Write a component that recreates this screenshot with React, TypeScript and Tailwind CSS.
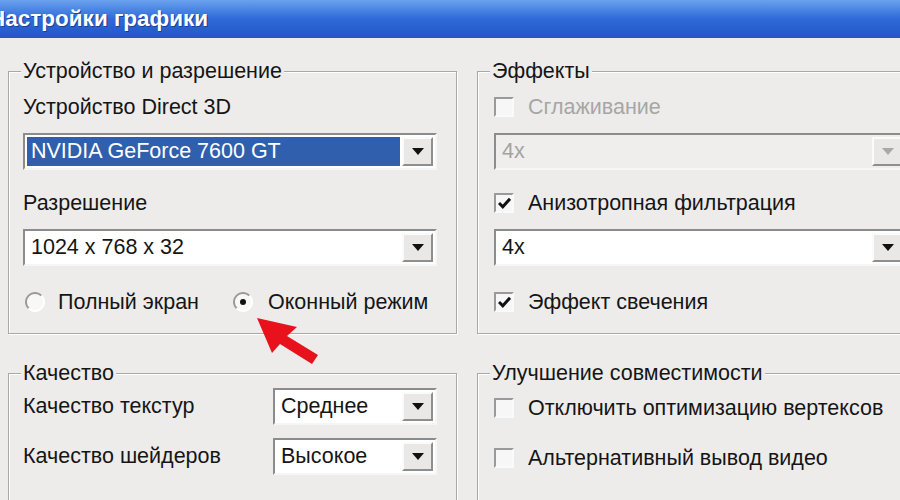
import React from 'react'

const BG = 'bg-[#edeceb]'

function Arrow({ disabled }: { disabled?: boolean }) {
  return (
    <svg width="12" height="7" viewBox="0 0 12 7">
      <path d="M0 0 H12 L6 7 Z" fill={disabled ? '#a9a9a9' : '#111'} />
    </svg>
  )
}

function Combo({
  value,
  selected,
  disabled,
  className = '',
}: {
  value: string
  selected?: boolean
  disabled?: boolean
  className?: string
}) {
  return (
    <div
      className={`flex h-[37px] border-2 border-t-[#8c8c8c] border-l-[#8c8c8c] border-b-[#f6f6f6] border-r-[#f6f6f6] p-[2px] ${
        disabled ? 'bg-[#efeeed]' : 'bg-white'
      } ${className}`}
    >
      <div className="flex-1 flex pr-[2px]">
        <div
          className={`flex-1 flex items-center px-[4px] ${
            selected ? 'bg-[#2f5fad] text-white' : disabled ? 'text-[#a3a3a3]' : 'text-[#151515]'
          }`}
        >
          {value}
        </div>
      </div>
      <div className="w-[31px] flex items-center justify-center bg-[#e9e8e7] border-2 border-t-[#fbfbfb] border-l-[#fbfbfb] border-b-[#8e8e8e] border-r-[#8e8e8e]">
        <Arrow disabled={disabled} />
      </div>
    </div>
  )
}

function Check({ checked, disabled, label }: { checked?: boolean; disabled?: boolean; label: string }) {
  return (
    <div className="flex items-center h-[24px]">
      <div className="w-[20px] h-[20px] border-2 border-t-[#9a9a9a] border-l-[#9a9a9a] border-b-[#fafafa] border-r-[#fafafa] bg-[#f7f7f7] flex items-center justify-center">
        {checked && (
          <svg width="13" height="12" viewBox="0 0 13 12">
            <path d="M1 6 L4.8 9.8 L12 1.8" stroke="#111" strokeWidth="3" fill="none" />
          </svg>
        )}
      </div>
      <span className={`ml-[14px] ${disabled ? 'text-[#a6a6a6]' : 'text-[#151515]'}`}>{label}</span>
    </div>
  )
}

function Radio({ checked }: { checked?: boolean }) {
  return (
    <svg width="20" height="20" viewBox="0 0 20 20">
      <circle cx="10" cy="10" r="9" fill="#f8f8f8" />
      <path d="M3.6 16.4 A9 9 0 0 1 16.4 3.6" stroke="#9b9b9b" strokeWidth="2" fill="none" />
      <path d="M16.4 3.6 A9 9 0 0 1 3.6 16.4" stroke="#ffffff" strokeWidth="2" fill="none" />
      {checked && <circle cx="10" cy="10" r="3" fill="#111" />}
    </svg>
  )
}

function Group({
  title,
  className = '',
  bodyClass = '',
  children,
}: {
  title: string
  className?: string
  bodyClass?: string
  children: React.ReactNode
}) {
  return (
    <fieldset className={`border border-[#a9a8a6] shadow-[inset_1px_1px_0_#ffffff,1px_1px_0_#ffffff] ${className}`}>
      <legend className={`ml-[12px] px-[2px] leading-[24px] text-[#151515] ${BG}`}>{title}</legend>
      <div className={bodyClass}>{children}</div>
    </fieldset>
  )
}

export default function App() {
  return (
    <div
      className={`relative w-[900px] h-[500px] overflow-hidden ${BG} font-['Liberation_Sans',Arial,sans-serif] text-[21.5px] text-[#151515]`}
    >
      {/* title bar */}
      <div className="h-[38px] flex items-center bg-linear-to-b from-[#6aa2ee] via-[#2e69d8] to-[#2456c6]">
        <span className="ml-[-11px] text-white font-bold text-[22.5px] [text-shadow:1px_1px_0_#1a3f96]">
          Настройки графики
        </span>
      </div>

      <div className="flex gap-[20px] pl-[8px] pt-[21px] w-[960px]">
        {/* left column */}
        <div className="w-[449px] flex flex-col gap-[27px]">
          <Group title="Устройство и разрешение" className="h-[275px]" bodyClass="px-[14px]">
            <div className="mt-[12px] leading-[24px]">Устройство Direct 3D</div>
            <Combo value="NVIDIA GeForce 7600 GT" selected className="mt-[14px] w-[414px]" />
            <div className="mt-[21px] leading-[24px]">Разрешение</div>
            <Combo value="1024 x 768 x 32" className="mt-[14px] w-[414px]" />
            <div className="mt-[24px] flex items-center h-[24px]">
              <div className="ml-[2px]">
                <Radio />
              </div>
              <span className="ml-[13px]">Полный экран</span>
              <div className="ml-[34px]">
                <Radio checked />
              </div>
              <span className="ml-[15px]">Оконный режим</span>
            </div>
          </Group>

          <Group title="Качество" className="h-[180px]" bodyClass="px-[14px]">
            <div className="mt-[3px] flex items-center justify-between w-[414px] h-[37px]">
              <span>Качество текстур</span>
              <Combo value="Среднее" className="w-[164px]" />
            </div>
            <div className="mt-[13px] flex items-center justify-between w-[414px] h-[37px]">
              <span>Качество шейдеров</span>
              <Combo value="Высокое" className="w-[164px]" />
            </div>
          </Group>
        </div>

        {/* right column */}
        <div className="w-[460px] flex flex-col gap-[27px]">
          <Group title="Эффекты" className="h-[275px]" bodyClass="pl-[16px]">
            <div className="mt-[12px]">
              <Check disabled label="Сглаживание" />
            </div>
            <Combo value="4x" disabled className="mt-[14px] w-[413px]" />
            <div className="mt-[21px]">
              <Check checked label="Анизотропная фильтрация" />
            </div>
            <Combo value="4x" className="mt-[14px] w-[413px]" />
            <div className="mt-[24px]">
              <Check checked label="Эффект свечения" />
            </div>
          </Group>

          <Group title="Улучшение совместимости" className="h-[180px]" bodyClass="pl-[16px]">
            <div className="mt-[11px]">
              <Check label="Отключить оптимизацию вертексов" />
            </div>
            <div className="mt-[26px]">
              <Check label="Альтернативный вывод видео" />
            </div>
          </Group>
        </div>
      </div>

      {/* red pointer arrow */}
      <svg className="absolute left-0 top-0 pointer-events-none" width="900" height="500">
        <polygon points="257,318 297,327 287,336 318,355 312,364 280,344 272,353" fill="#e8121c" />
      </svg>
    </div>
  )
}
